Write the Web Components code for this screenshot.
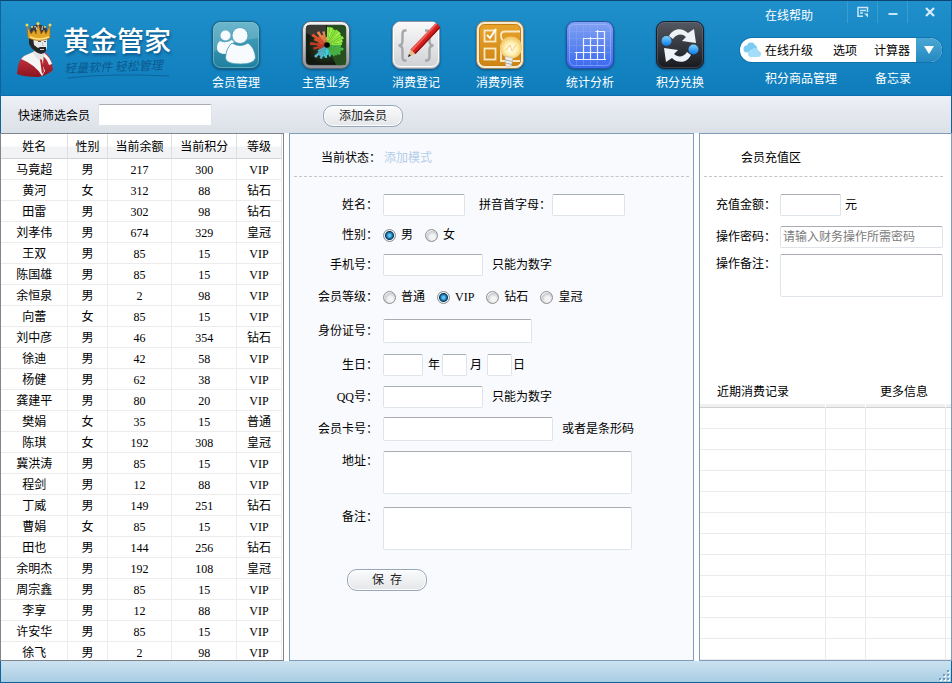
<!DOCTYPE html>
<html lang="zh-CN">
<head>
<meta charset="utf-8">
<title>黄金管家</title>
<style>
html, body { margin: 0; height: 100%; }
body { font: 12px/16px "Liberation Serif", "Noto Sans CJK SC", sans-serif; color: #000; background: #fff; }
</style>
</head>
<body>
<app-window></app-window>
<script>
const define = (name, html, setup) => {
  const tpl = document.createElement('template');
  tpl.innerHTML = html;
  customElements.define(name, class extends HTMLElement {
    constructor() {
      super();
      this.attachShadow({ mode: 'open' }).append(tpl.content.cloneNode(true));
    }
    connectedCallback() { if (setup) setup(this, this.shadowRoot); }
  });
};

/* Styles shared by both forms */
const fieldCss = `
  * { box-sizing: border-box; }
  input:not([type=radio]), textarea {
    font: inherit; color: #000; background: #fff; margin: 0; padding: 0 2px; height: 22px;
    border: 1px solid #dfe3ea; border-top-color: #a9adb3; border-radius: 2px; outline: 0; min-width: 0;
  }
  input.tall { height: 24px; }
  textarea { display: block; height: 43px; resize: none; }
  ::placeholder { color: #7c7c7c; opacity: 1; }
  input[type=radio] {
    appearance: none; width: 13px; height: 13px; margin: 0; border-radius: 50%; border: 1px solid #8e8f8f;
    background: radial-gradient(circle at 60% 65%, #f4f4f4 0 25%, #c9ccd0 60%, #f4f4f4 70%);
  }
  input[type=radio]:checked {
    background: radial-gradient(circle at 50% 50%, #5cc8f5 0 1px, #1672ac 3px, #0b3554 4px, #eef1f4 5px);
  }
  .opt { display: flex; align-items: center; gap: 5px; margin-right: 12px; }
`;

/* Tile pictures of the main navigation, all on a 48 x 48 canvas */
const burst = () => {
  const rad = [18,18,17,18,18,17,18,16,15,14,17,15,16,14,13,11, 12,10,13,12,15,13,17,11, 9,14,10,17,9,14,18,12,16,11,14,8];
  const col = i => i < 9 ? (i % 3 === 1 ? '#a3f04a' : '#86e63a') : i < 16 ? '#4cb848' : i < 20 ? '#3fd0d6' : i < 24 ? '#58b9d8' : i < 28 ? '#c8372a' : i < 32 ? '#e8522e' : '#f58a4c';
  return rad.map((r, i) => {
    const p = a => (25 + r * Math.sin(a * Math.PI / 18)).toFixed(1) + ' ' + (24 - r * Math.cos(a * Math.PI / 18)).toFixed(1);
    return `<path fill="${col(i)}" d="M25 24L${p(i)}L${p(i + 1)}Z"/>`;
  }).join('');
};
const grad = (id, a, b) => `<linearGradient id="${id}" x1="0" y1="0" x2="0" y2="1"><stop stop-color="${a}"/><stop offset="1" stop-color="${b}"/></linearGradient>`;
const arrow = '<path d="M13 15C17 7 26 6 32 12L38 8L40 22L26 20L30 16C26 12 20 13 17 18Z"/>';
const icons = {
  members: `<defs>${grad('g', '#4fa9c4', '#1f7f9e')}</defs>
    <rect x=".5" y=".5" width="47" height="47" rx="8" fill="url(#g)" stroke="#1a6280"/>
    <path d="M1.500 9Q1.500 1.500 9 1.500H39Q46.500 1.500 46.500 9V17Q20 20 1.500 31Z" fill="#fff" opacity=".16"/>
    <rect x="1.500" y="1.500" width="45" height="45" rx="7" fill="none" stroke="#8fd0e0" opacity=".5"/>
    <g fill="#f7fbfd"><circle cx="13.500" cy="14.500" r="5"/><path d="M8 20Q13 23 20 19L22 21Q16 25 14 33Q5 33 5 27Q5 22 8 20Z"/></g>
    <g fill="#f7fbfd" stroke="#3d97b4" stroke-width=".8"><path d="M20 22Q28 27 36 22Q43 27 43.500 37Q42 43 28.500 43Q14 43 13.500 37Q14 27 20 22Z"/><circle cx="28" cy="14.500" r="8"/></g>`,
  business: `<defs>${grad('g', '#f4f5f6', '#8c8f95')}<radialGradient id="h"><stop stop-color="#3b5a2c"/><stop offset="1" stop-color="#11180f"/></radialGradient></defs>
    <rect x=".5" y=".5" width="47" height="47" rx="8" fill="url(#g)" stroke="#5b6470"/>
    <rect x="4" y="4" width="40" height="40" rx="4" fill="url(#h)" stroke="#333" stroke-width=".5"/>
    <path d="M25 24V4H40Q44 4 44 8V44H34Z" fill="#2b5e22" opacity=".8"/><path d="M25 24L4 12V8Q4 4 8 4H24Z" fill="#3a3a34"/>
    ${burst()}<circle cx="25" cy="24" r="2.800" fill="#050505"/>`,
  record: `<defs>${grad('g', '#fafafa', '#cfd0d3')}</defs>
    <rect x=".5" y=".5" width="47" height="47" rx="8" fill="url(#g)" stroke="#8d9aa6"/>
    <rect x="1.500" y="1.500" width="45" height="44" rx="7" fill="none" stroke="#fff"/>
    <g fill="none" stroke="#a3a6aa" stroke-width="2.400"><path d="M14.500 9.500H13Q10.500 9.500 10.500 13V20Q10.500 24.500 6.500 24.500Q10.500 24.500 10.500 29V36Q10.500 39.500 13 39.500H14.500"/>
    <path d="M33 9.500H34.500Q37.500 9.500 37.500 13V20Q37.500 24.500 41.500 24.500Q37.500 24.500 37.500 29V36Q37.500 39.500 34.500 39.500H33"/></g>
    <path d="M16 36L18.500 28.500L23.500 33Z" fill="#e3bd8b"/><path d="M16 36L17 33L19 34.800Z" fill="#222"/>
    <path d="M18.500 28.500L43.500 2.500Q47 2.500 48 7L23.500 33Z" fill="#d3201f"/><path d="M18.500 28.500L43.500 2.500L45 3.500L20.500 30.300Z" fill="#f0605a"/><path d="M22.500 32L47.500 5.500L48 7L23.500 33Z" fill="#8f0f12"/>`,
  list: `<defs>${grad('g', '#e7a32c', '#cf8413')}<radialGradient id="h" cx=".5" cy=".55"><stop stop-color="#fff"/><stop offset=".55" stop-color="#fff0b4"/><stop offset="1" stop-color="#f2c868"/></radialGradient></defs>
    <rect x=".5" y=".5" width="47" height="47" rx="8" fill="#f7ead0" stroke="#9a8455"/>
    <rect x="3.500" y="3.500" width="41" height="41" rx="5" fill="url(#g)" stroke="#c47f14"/>
    <g fill="none" stroke="#f9e8c4" stroke-width="1.800"><rect x="8.500" y="9.500" width="11" height="11"/><rect x="8.500" y="27.500" width="11" height="11"/>
    <path d="M11 14L14 17L20 8" stroke="#fff"/><path d="M44 10.500H29Q25 10.500 25 14Q25 20 29 20.500H44M25 24V40H44"/></g>
    <circle cx="35" cy="26.500" r="11" fill="url(#h)"/><path d="M30 29L34 24L36 30L40 24" fill="none" stroke="#eec15a" stroke-width=".8"/>
    <path d="M29 35L37 37L35.500 45Q31 47.500 29.500 44Z" fill="#ececec" stroke="#b5a27a" stroke-width=".5"/><path d="M29.500 39L36.500 40.500M29.500 42L36 43.500" stroke="#999" stroke-width=".8"/>`,
  stats: `<defs>${grad('g', '#82a2f1', '#3a68ee')}</defs>
    <rect x=".5" y=".5" width="47" height="47" rx="8" fill="url(#g)" stroke="#2750a8"/>
    <rect x="3.500" y="3.500" width="41" height="41" rx="5" fill="none" stroke="#a9c2ff" opacity=".5"/>
    <g fill="none" stroke="#8fb0fb" stroke-width=".5" opacity=".7"><path d="M3 10.500H45M3 17.500H45M3 24.500H45M3 31.500H45M10.500 3V45M17.500 3V45M24.500 3V45M31.500 3V45"/></g>
    <path fill="none" stroke="#edf3ff" stroke-width="1.200" d="M29.500 10.500H38.500V39M31.500 9V39M17.500 17.500H38.500M24.500 16V39M17.500 17V39M17 24.500H39M9 31.500H39M10.500 31V39M9 38.500H40"/>`,
  swap: `<defs>${grad('g', '#555963', '#17191e')}${grad('h', '#7ed2ff', '#0879e8')}</defs>
    <rect x=".5" y=".5" width="47" height="47" rx="8" fill="url(#g)" stroke="#14202c"/>
    <rect x="1.500" y="1.500" width="45" height="45" rx="7" fill="none" stroke="#777c86" opacity=".4"/>
    <g fill="#eef3f8">${arrow}<g transform="rotate(180 24 24.500)">${arrow}</g></g>
    <circle cx="10.500" cy="20" r="5" fill="url(#h)"/><circle cx="37.500" cy="28.500" r="5" fill="url(#h)"/>`
};

define('brand-logo', `
<style>
:host { display: flex; align-items: flex-start; gap: 7px; }
h1 { margin: 0; font: 500 27px/36px "Noto Sans CJK SC", sans-serif; color: #fff; text-shadow: 1px 2px 3px #0a5486; }
p { margin: 0; font: italic 12px/16px "Noto Sans CJK SC", sans-serif; color: #0b5a8e; transform: rotate(-2deg); padding-left: 1px; }
svg { display: block; flex: none; }
</style>
<svg width="40" height="56" viewBox="0 0 40 56" aria-hidden="true">
  <defs><linearGradient id="r" x1="0" y1="0" x2="0" y2="1"><stop stop-color="#d33a42"/><stop offset="1" stop-color="#8c1420"/></linearGradient></defs>
  <path d="M1 52Q2 37 8 34L18 30L30 31Q36 36 37 48Q30 54 22 55Q8 55 1 52Z" fill="url(#r)"/>
  <path d="M8 34L17 30Q25 37 29 49L26 54Q20 43 5 37Z" fill="#f5f5f5"/><path d="M28 31Q34 35 36 42L33 43Q31 37 27 34Z" fill="#f5f5f5"/>
  <path d="M18 28L28 30L27 42Q21 38 17 31Z" fill="#e4e4e4"/><path d="M24 37L26 38L28 50L26 52Z" fill="#b42029"/>
  <path d="M14 15H31V25Q30 31 25 32Q18 30 14 23Z" fill="#e9e9e9"/>
  <path d="M13 15H17L18 23L22 26L24 25L30 25L30 29Q28 32 25 32Q17 30 13 22Z" fill="#262626"/><path d="M24 27.500H28" stroke="#ccc"/>
  <path d="M22 19.500H25M28 19.500H30" stroke="#555"/><path d="M26.500 20V23.500H28" fill="none" stroke="#bbb" stroke-width=".8"/>
  <path d="M15 5Q22 0 30 5L33 14H13Z" fill="#3b3c46"/>
  <path d="M11 3L15 12L18 8L20 12L22 1L25 12L28 8L30 12L34 3L34 16Q23 21 12 16Z" fill="#e2a526" stroke="#9d6510" stroke-width=".6"/>
  <path d="M14 15Q23 19 33 15" fill="none" stroke="#ffe48a" stroke-width="1.500"/>
  <g fill="#f8d35f"><circle cx="11" cy="3" r="1.500"/><circle cx="22" cy="1.500" r="1.500"/><circle cx="34" cy="3" r="1.500"/><circle cx="16" cy="5" r="1"/><circle cx="29" cy="5" r="1"/></g>
  <path d="M18 5Q20 3 21 8M27 4Q26 5 26 8" fill="none" stroke="#d8d8dc"/>
</svg>
<div><h1>黄金管家</h1><p>轻量软件 轻松管理</p>
<svg width="108" height="5" viewBox="0 0 108 5" aria-hidden="true"><path d="M4 4Q50 -1 106 2" fill="none" stroke="#0b649c"/></svg></div>`);

define('nav-tile', `
<style>
:host { display: block; width: 48px; }
button { display: flex; flex-direction: column; align-items: center; gap: 6px; width: 100%; padding: 0; border: 0; background: none; font: inherit; color: #fff; white-space: nowrap; cursor: pointer; }
svg { display: block; flex: none; filter: drop-shadow(0 1px 1px #0b4f7d); }
</style>
<button type="button"><svg width="48" height="48" viewBox="0 0 48 48" aria-hidden="true"></svg><span><slot></slot></span></button>`,
(host, root) => { root.querySelector('svg').innerHTML = icons[host.getAttribute('icon')]; });

define('header-tools', `
<style>
:host { display: flex; flex-direction: column; width: 212px; flex: none; }
a { color: #fff; text-decoration: none; white-space: nowrap; }
.top { display: flex; height: 37px; }
.top a { padding: 7px 0 0 26px; flex: 1; }
.win { display: flex; height: 22px; }
.win button { width: 30px; border: 0; border-left: 1px solid #3b9dce; padding: 0; background: none; }
.win button:last-child { width: 44px; }
.win svg { display: block; margin: 0 auto; }
.pill { display: flex; box-sizing: border-box; margin: 0 9px 0 1px; height: 24px; border-radius: 12px; overflow: hidden; background: #fff; align-items: center; box-shadow: 0 0 0 1px #1273ab; }
.pill svg { flex: none; margin-left: 3px; }
.pill a { color: #000; padding-top: 1px; }
.pill .a { flex: 1; margin-left: 4px; }
.pill .b { margin-right: 17px; }
.pill .c { margin-right: 6px; }
.pill button { width: 26px; height: 24px; padding: 0; border: 0; background: linear-gradient(#4ba7d4, #2389c1); color: #fff; display: grid; place-items: center; }
.pill button svg { margin: 0; }
.foot { display: flex; justify-content: space-between; padding: 9px 40px 0 26px; }
</style>
<div class="top"><a href="#help">在线帮助</a>
<div class="win">
<button type="button" aria-label="菜单"><svg width="12" height="12" viewBox="0 0 12 12" fill="none" stroke="#c9e6f6" stroke-width="1.500"><path d="M6 10.200H1V1.500H10.500V6M3 4.500H9M3 7H6"/><path d="M7 7.500H11V11.500Z" fill="#c9e6f6" stroke="none"/></svg></button>
<button type="button" aria-label="最小化"><svg width="12" height="12" viewBox="0 0 12 12"><path d="M1.500 8H10.500" stroke="#c9e6f6" stroke-width="2"/></svg></button>
<button type="button" aria-label="关闭"><svg width="12" height="12" viewBox="0 0 12 12"><path d="M2 2L10 10M10 2L2 10" stroke="#d6edf9" stroke-width="2.200"/></svg></button>
</div></div>
<div class="pill"><svg width="18" height="16" viewBox="0 0 18 16" aria-hidden="true"><g fill="#7ccbf3"><circle cx="4" cy="7" r="3.500"/><circle cx="8" cy="4.500" r="4"/><circle cx="11" cy="6" r="3"/></g><g fill="#a3dcf9"><circle cx="8" cy="12" r="3"/><circle cx="12" cy="9.500" r="3.500"/><circle cx="15" cy="12" r="3"/><path d="M8 11H15V15H8Z"/></g></svg>
<a class="a" href="#update">在线升级</a><a class="b" href="#options">选项</a><a class="c" href="#calc">计算器</a>
<button type="button" aria-label="更多"><svg width="10" height="8" viewBox="0 0 10 8"><path d="M0 0H10L5 8Z" fill="#fff"/></svg></button></div>
<div class="foot"><a href="#goods">积分商品管理</a><a href="#memo">备忘录</a></div>`);

define('app-header', `
<style>
:host { display: flex; box-sizing: border-box; height: 96px; flex: none; padding-left: 15px; background: linear-gradient(#1f90cb, #0f7dbc); border: 1px solid #10649c; border-top-color: #0b4671; border-bottom-color: #0b6dab; }
brand-logo { width: 196px; flex: none; padding-top: 21px; }
nav { display: flex; gap: 36px; flex: 1; padding-top: 20px; }
nav div { display: flex; gap: 42px; }
</style>
<brand-logo></brand-logo>
<nav aria-label="主菜单"><div><nav-tile icon="members">会员管理</nav-tile><nav-tile icon="business">主营业务</nav-tile><nav-tile icon="record">消费登记</nav-tile></div>
<div><nav-tile icon="list">消费列表</nav-tile><nav-tile icon="stats">统计分析</nav-tile><nav-tile icon="swap">积分兑换</nav-tile></div></nav>
<header-tools></header-tools>`);

define('pill-button', `
<style>
:host { display: inline-block; }
button { display: block; width: 80px; height: 22px; padding: 0; border: 1px solid #97a6b8; border-radius: 10px; background: linear-gradient(#fafbfc, #e4e6e9); box-shadow: inset 0 0 0 1px #fff; font: inherit; color: #222; white-space: pre; }
</style>
<button type="button"><slot></slot></button>`);

define('filter-bar', `
<style>${fieldCss}
:host { display: flex; align-items: center; box-sizing: border-box; height: 37px; flex: none; padding: 0 18px 0 17px; background: linear-gradient(#edf0f5, #dbe0e7); border: 1px solid #10649c; border-width: 0 1px; }
label { width: 80px; padding-top: 2px; }
input { width: 114px; }
pill-button { margin-left: 111px; padding-top: 2px; }
</style>
<label for="q">快速筛选会员</label><input id="q" type="text"><pill-button>添加会员</pill-button>`);

const members = `马竟超,男,217,300,VIP|黄河,女,312,88,钻石|田雷,男,302,98,钻石|刘孝伟,男,674,329,皇冠|王双,男,85,15,VIP|陈国雄,男,85,15,VIP|余恒泉,男,2,98,VIP|向蕾,女,85,15,VIP|刘中彦,男,46,354,钻石|徐迪,男,42,58,VIP|杨健,男,62,38,VIP|龚建平,男,80,20,VIP|樊娟,女,35,15,普通|陈琪,女,192,308,皇冠|冀洪涛,男,85,15,VIP|程剑,男,12,88,VIP|丁威,男,149,251,钻石|曹娟,女,85,15,VIP|田也,男,144,256,钻石|余明杰,男,192,108,皇冠|周宗鑫,男,85,15,VIP|李享,男,12,88,VIP|许安华,男,85,15,VIP|徐飞,男,2,98,VIP`.split('|').map(r => r.split(','));

define('member-table', `
<style>
:host { display: block; min-height: 0; overflow: auto; scrollbar-width: none; background: #fff; border: 1px solid #7f858e; padding-right: 1px; }
table { width: 100%; table-layout: fixed; border-collapse: separate; border-spacing: 0; text-align: center; }
th, td { box-sizing: border-box; height: 21px; padding: 2px 0 0; font-weight: normal; line-height: 16px; border-right: 1px solid #ececec; border-bottom: 1px solid #ececec; }
th { height: 25px; background: linear-gradient(#fff 50%, #f2f3f5 55%); border-right-color: #dedfe1; border-bottom-color: #d2d3d6; }
</style>
<table><colgroup><col style="width:24%"><col style="width:14%"><col style="width:23%"><col style="width:23%"><col style="width:16%"></colgroup>
<thead><tr><th scope="col">姓名</th><th scope="col">性别</th><th scope="col">当前余额</th><th scope="col">当前积分</th><th scope="col">等级</th></tr></thead>
<tbody></tbody></table>`,
(host, root) => {
  root.querySelector('tbody').innerHTML = members.map(r => `<tr>${r.map(c => `<td>${c}</td>`).join('')}</tr>`).join('');
});

define('field-row', `
<style>
:host { display: flex; align-items: center; height: 30px; }
:host([tall]) { height: 34px; }
:host([area]) { height: auto; align-items: flex-start; margin-bottom: 13px; }
.l { width: var(--label, 88px); flex: none; text-align: right; white-space: nowrap; margin-right: var(--gap, 6px); }
:host([area]) .l { padding-top: 2px; }
.c { display: flex; align-items: center; flex: 1; min-width: 0; white-space: nowrap; }
</style>
<div class="l"><slot name="label"></slot></div><div class="c"><slot></slot></div>`);

define('member-form', `
<style>${fieldCss}
:host { display: block; box-sizing: border-box; min-height: 0; overflow: auto; background: #f9fafd; border: 1px solid #7f9db9; padding: 16px 4px 0 0; }
.state { display: flex; gap: 3px; padding: 0 0 10px 31px; color: #b4cdea; }
.state b { font-weight: normal; color: #000; }
hr { margin: 0 0 13px 4px; border: 0; border-top: 1px dashed #c3c6cb; }
form { --gap: 5px; }
.note { margin-left: 9px; }
.area { margin-top: 5px; }
pill-button { margin: 6px 0 0 57px; }
</style>
<div class="state"><b>当前状态：</b><span>添加模式</span></div><hr>
<form>
<field-row><label slot="label" for="name">姓名：</label><input id="name" style="width:82px"><label for="py" style="margin:0 1px 0 14px">拼音首字母：</label><input id="py" style="width:73px"></field-row>
<field-row role="radiogroup" aria-label="性别"><span slot="label">性别：</span><label class="opt"><input type="radio" name="sex" checked>男</label><label class="opt"><input type="radio" name="sex">女</label></field-row>
<field-row><label slot="label" for="tel">手机号：</label><input id="tel" style="width:100px"><span class="note">只能为数字</span></field-row>
<field-row tall role="radiogroup" aria-label="会员等级"><span slot="label">会员等级：</span><label class="opt"><input type="radio" name="lv">普通</label><label class="opt"><input type="radio" name="lv" checked>VIP</label><label class="opt"><input type="radio" name="lv">钻石</label><label class="opt"><input type="radio" name="lv">皇冠</label></field-row>
<field-row tall><label slot="label" for="idno">身份证号：</label><input id="idno" class="tall" style="width:149px"></field-row>
<field-row tall><label slot="label" for="yy">生日：</label><input id="yy" style="width:40px"><label for="yy" style="margin:0 2px 0 5px">年</label><input id="mm" style="width:25px"><label for="mm" style="margin:0 5px 0 3px">月</label><input id="dd" style="width:25px"><label for="dd" style="margin-left:1px">日</label></field-row>
<field-row><label slot="label" for="qq">QQ号：</label><input id="qq" style="width:100px"><span class="note">只能为数字</span></field-row>
<field-row tall><label slot="label" for="card">会员卡号：</label><input id="card" class="tall" style="width:170px"><span class="note">或者是条形码</span></field-row>
<field-row area class="area"><label slot="label" for="addr">地址：</label><textarea id="addr" style="width:249px"></textarea></field-row>
<field-row area><label slot="label" for="memo">备注：</label><textarea id="memo" style="width:249px"></textarea></field-row>
<pill-button>保&nbsp; 存</pill-button>
</form>`);

define('recharge-panel', `
<style>${fieldCss}
:host { display: flex; flex-direction: column; box-sizing: border-box; min-height: 0; overflow: hidden; background: #fff; border: 1px solid #7f9db9; }
h2 { margin: 0; font: inherit; padding: 16px 0 10px 41px; }
hr { margin: 0 8px 13px 4px; border: 0; border-top: 1px dashed #c3c6cb; align-self: stretch; }
form { --label: 76px; --gap: 4px; padding-right: 8px; }
form input.w { flex: 1; }
textarea { flex: 1; }
.log { margin-top: 74px; }
.bar { display: flex; justify-content: space-between; padding: 0 23px 4px 17px; }
a { color: #000; text-decoration: none; }
table { width: 100%; table-layout: fixed; border-collapse: separate; border-spacing: 0; }
th, td { height: 21px; padding: 0; border-right: 1px solid #ebebeb; border-bottom: 1px solid #ebebeb; }
th { height: 4px; background: #f0f0f1; border-bottom-color: #cfd0d2; border-right-color: #fff; }
th:last-child, td:last-child { border-right: 0; }
</style>
<h2>会员充值区</h2><hr>
<form>
<field-row><label slot="label" for="sum">充值金额：</label><input id="sum" style="width:61px"><label for="sum" style="margin-left:4px">元</label></field-row>
<field-row tall><label slot="label" for="pw">操作密码：</label><input id="pw" class="w" placeholder="请输入财务操作所需密码"></field-row>
<field-row area><label slot="label" for="rm">操作备注：</label><textarea id="rm"></textarea></field-row>
</form>
<section class="log"><div class="bar"><span>近期消费记录</span><a href="#more">更多信息</a></div>
<table aria-label="近期消费记录"><colgroup><col><col style="width:16%"><col style="width:32%"><col style="width:2%"></colgroup><thead><tr><th></th><th></th><th></th><th></th></tr></thead><tbody></tbody></table></section>`,
(host, root) => { root.querySelector('tbody').innerHTML = '<tr><td></td><td></td><td></td><td></td></tr>'.repeat(12); });

define('status-bar', `
<style>
:host { display: flex; justify-content: flex-end; align-items: flex-end; box-sizing: border-box; height: 22px; flex: none; background: linear-gradient(#cbe2f0, #a9cde3); border: 1px solid #10649c; border-top: 0; }
</style>
<svg width="14" height="14" viewBox="0 0 14 14" aria-hidden="true"><g fill="#fff"><path d="M11 3h2v2h-2zM11 7h2v2h-2zM11 11h2v2h-2zM7 7h2v2H7zM7 11h2v2H7zM3 11h2v2H3z"/></g><g fill="#6d9dbd"><path d="M10 2h2v2h-2zM10 6h2v2h-2zM10 10h2v2h-2zM6 6h2v2H6zM6 10h2v2H6zM2 10h2v2H2z"/></g></svg>`);

define('app-window', `
<style>
:host { display: flex; flex-direction: column; height: 100vh; }
main { display: grid; grid-template-columns: minmax(0, 284fr) minmax(0, 405fr) minmax(0, 253fr); grid-template-rows: minmax(0, 1fr); column-gap: 5px; flex: 1; min-height: 0; background: #fff; }
</style>
<app-header></app-header>
<filter-bar></filter-bar>
<main><member-table></member-table><member-form></member-form><recharge-panel></recharge-panel></main>
<status-bar></status-bar>`);
</script>
</body>
</html>
